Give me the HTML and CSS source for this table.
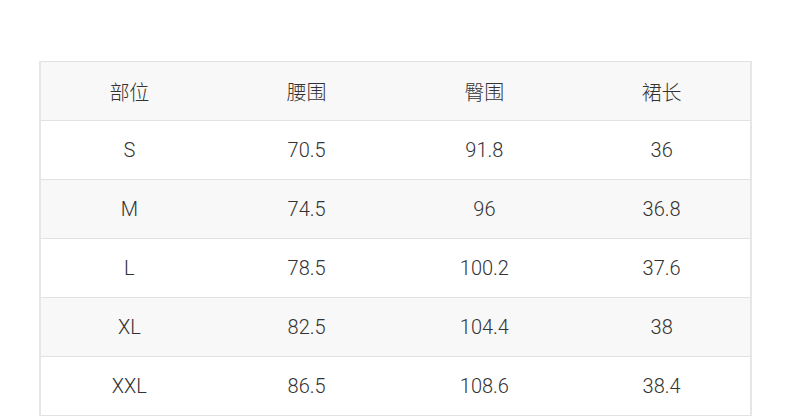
FILE: index.html
```html
<!DOCTYPE html>
<html lang="zh">
<head>
<meta charset="utf-8">
<link rel="stylesheet" href="styles.css">
</head>
<body>
<div class="page">
  <table class="size-table">
    <tr class="row gray"><td>部位</td><td>腰围</td><td>臀围</td><td>裙长</td></tr>
    <tr class="row"><td>S</td><td>70.5</td><td>91.8</td><td>36</td></tr>
    <tr class="row gray"><td>M</td><td>74.5</td><td>96</td><td>36.8</td></tr>
    <tr class="row"><td>L</td><td>78.5</td><td>100.2</td><td>37.6</td></tr>
    <tr class="row gray"><td>XL</td><td>82.5</td><td>104.4</td><td>38</td></tr>
    <tr class="row"><td>XXL</td><td>86.5</td><td>108.6</td><td>38.4</td></tr>
  </table>
</div>
</body>
</html>
```
FILE: styles.css
```css
html, body {
  margin: 0;
  padding: 0;
  background: #ffffff;
}
.page {
  padding: 61px 0 0 39px;
}
.size-table {
  width: 713px;
  border-collapse: collapse;
  table-layout: fixed;
  font-family: "Roboto", "Noto Sans CJK SC", sans-serif;
  font-weight: 300;
  font-size: 20px;
  color: #333333;
}
.size-table td {
  height: 58px;
  padding: 0;
  text-align: center;
  vertical-align: middle;
  border: 1px solid #e2e2e2;
  border-left: none;
  border-right: none;
}
.size-table td:first-child {
  border-left: 2px solid #e6e6e6;
}
.size-table td:last-child {
  border-right: 2px solid #e6e6e6;
}
.row.gray td {
  background: #f8f8f8;
}
```
